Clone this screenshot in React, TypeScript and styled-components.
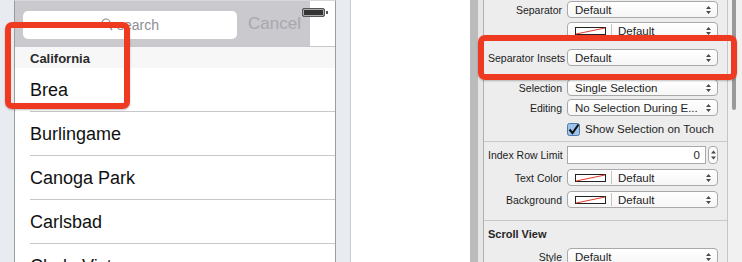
import React from 'react';
import styled, { createGlobalStyle } from 'styled-components';

const Global = createGlobalStyle`
  html, body {
    margin: 0;
    padding: 0;
    background: #ffffff;
  }
`;

const Page = styled.div`
  position: relative;
  display: flex;
  width: 742px;
  height: 262px;
  overflow: hidden;
  font-family: 'Liberation Sans', Arial, sans-serif;
`;

const Gutter = styled.div<{ $w: number; $line?: boolean }>`
  flex: 0 0 ${(p) => p.$w}px;
  background: #e8ecf0;
  border-right: ${(p) => (p.$line ? '1px solid #c3cedb' : 'none')};
`;

const Phone = styled.div`
  position: relative;
  flex: 0 0 320px;
  display: flex;
  flex-direction: column;
  border-left: 1px solid #9c9c9c;
  border-right: 1px solid #9c9c9c;
  border-top: 1px solid #d8d8d8;
  background: #ffffff;
  overflow: hidden;

  & > * {
    flex-shrink: 0;
  }
`;

const SearchRow = styled.div`
  display: flex;
  height: 45px;
  border-bottom: 1px solid #c8c7cc;
`;

const SearchBar = styled.div`
  flex: 0 0 295px;
  display: flex;
  align-items: center;
  gap: 11px;
  padding: 0 8px;
  box-sizing: border-box;
  background: #c9c9ce;
`;

const SearchField = styled.div`
  flex: 0 0 214px;
  height: 28px;
  border-radius: 5px;
  background: #ffffff;
  display: flex;
  align-items: center;
  justify-content: center;
  gap: 4px;
  margin-top: 2px;
  color: #8e8e93;
  font-size: 14px;
  box-sizing: border-box;
`;

const Cancel = styled.span`
  font-size: 17px;
  color: #a8a8ad;
  margin-top: 1px;
`;

const Battery = styled.div`
  position: absolute;
  top: 7px;
  left: 287px;
  width: 21px;
  height: 7px;
  border: 1px solid #555;
  border-radius: 2px;
  background: #333;
  box-shadow: inset 0 0 0 1px #aaa;

  &::after {
    content: '';
    position: absolute;
    right: -4px;
    top: 2px;
    width: 2px;
    height: 3px;
    background: #555;
  }
`;

const SectionHeader = styled.div`
  height: 21px;
  background: #f7f7f7;
  padding-left: 15px;
  font-size: 13px;
  font-weight: bold;
  color: #2b2b2b;
  display: flex;
  align-items: center;
  padding-top: 2px;
  box-sizing: border-box;
`;

const Cell = styled.div`
  height: 44px;
  margin-left: 15px;
  border-bottom: 1px solid #c8c7cc;
  display: flex;
  align-items: center;
  font-size: 18px;
  color: #111;
  box-sizing: border-box;
  padding-top: 1px;
`;

const Canvas = styled.div`
  flex: 0 0 119px;
  background: #ffffff;
`;

const Splitter = styled.div`
  flex: 0 0 8px;
  background: #bbbbbb;
  border-right: 5px solid #e6e6e6;
`;

const Inspector = styled.div`
  flex: 0 0 243px;
  background: #ededed;
  border-left: 1px solid #b0b0b0;
  border-right: 1px solid #c6c6c6;
  display: flex;
  flex-direction: column;
  font-size: 11px;
  color: #262626;
  overflow: hidden;

  & > * {
    flex-shrink: 0;
  }
`;

const Section = styled.div<{ $line?: boolean }>`
  display: flex;
  flex-direction: column;
  padding: 0 9px 0 4px;
  border-bottom: ${(p) => (p.$line ? '1px solid #c9c9c9' : 'none')};
`;

const Field = styled.div<{ $mt: number; $h?: number }>`
  display: grid;
  grid-template-columns: 74px 151px;
  column-gap: 5px;
  align-items: center;
  margin-top: ${(p) => p.$mt}px;
  height: ${(p) => p.$h ?? 17}px;
`;

const Label = styled.span`
  text-align: right;
  font-size: 10.5px;
  white-space: nowrap;
  color: #1c1c1c;
`;

const Popup = styled.div`
  position: relative;
  height: 17px;
  box-sizing: border-box;
  border: 1px solid #a9a9a9;
  border-radius: 4px;
  background: linear-gradient(#ffffff, #f6f6f6);
  display: flex;
  align-items: center;
  padding-left: 7px;
  font-size: 11.5px;
  color: #1e1e1e;
  white-space: nowrap;
`;

const Arrows = styled.svg`
  position: absolute;
  right: 6px;
  top: 4px;
`;

const Swatch = styled.svg`
  flex: 0 0 auto;
  margin-right: 5px;
`;

const Divider = styled.span`
  width: 1px;
  height: 13px;
  background: #c4c4c4;
  margin-right: 6px;
`;

const CheckRow = styled.div<{ $mt: number }>`
  display: flex;
  align-items: center;
  gap: 5px;
  margin-top: ${(p) => p.$mt}px;
  margin-left: 79px;
  height: 14px;
  font-size: 11.5px;
  white-space: nowrap;
`;

const NumberBox = styled.div`
  display: flex;
  align-items: center;
  gap: 2px;
`;

const NumberField = styled.div`
  flex: 1;
  height: 18px;
  box-sizing: border-box;
  border: 1px solid #a9a9a9;
  background: #ffffff;
  text-align: right;
  padding-right: 5px;
  font-size: 11.5px;
  line-height: 16px;
`;

const Stepper = styled.div`
  flex: 0 0 10px;
  height: 18px;
  box-sizing: border-box;
  border: 1px solid #a9a9a9;
  border-radius: 4px;
  background: #fbfbfb;
  display: flex;
  align-items: center;
  justify-content: center;
`;

const SectionTitle = styled.div<{ $mt: number }>`
  margin-top: ${(p) => p.$mt}px;
  font-weight: bold;
  font-size: 11px;
  height: 12px;
  line-height: 12px;
`;

const Spacer = styled.div<{ $h: number }>`
  height: ${(p) => p.$h}px;
`;

const Scroller = styled.div`
  flex: 0 0 14px;
  background: #f1f1f1;
  position: relative;

  &::before {
    content: '';
    position: absolute;
    left: 4px;
    top: -6px;
    width: 4px;
    height: 116px;
    border-radius: 3px;
    background: #9a9a9a;
  }
`;

const Highlight = styled.div<{ $x: number; $y: number; $w: number; $h: number }>`
  position: absolute;
  left: ${(p) => p.$x}px;
  top: ${(p) => p.$y}px;
  width: ${(p) => p.$w}px;
  height: ${(p) => p.$h}px;
  box-sizing: border-box;
  border: 6px solid #ef3a22;
  border-radius: 7px;
  box-shadow: 0 1px 2px rgba(0, 0, 0, 0.25);
`;

const UpDown = () => (
  <Arrows width="5" height="8" viewBox="0 0 5 8">
    <path d="M0 3 L2.5 0 L5 3 Z M0 5 L2.5 8 L5 5 Z" fill="#4a4a4a" />
  </Arrows>
);

const ColorSwatch = () => (
  <Swatch width="31" height="8" viewBox="0 0 31 8">
    <rect x="0.5" y="0.5" width="30" height="7" fill="#fff" stroke="#222" />
    <line x1="1" y1="7" x2="30" y2="1" stroke="#e0392b" strokeWidth="1" />
  </Swatch>
);

const Magnifier = () => (
  <svg width="12" height="13" viewBox="0 0 12 13">
    <circle cx="5" cy="5" r="4" fill="none" stroke="#8e8e93" strokeWidth="1.2" />
    <line x1="8" y1="8.2" x2="11" y2="12" stroke="#8e8e93" strokeWidth="1.3" />
  </svg>
);

const Check = () => (
  <svg width="13" height="13" viewBox="0 0 13 13">
    <rect x="0.5" y="0.5" width="12" height="12" rx="2" fill="#9cc3ec" stroke="#4f79a8" />
    <path d="M2.5 6.5 L5.5 10 L11.5 1.5" fill="none" stroke="#111" strokeWidth="2" />
  </svg>
);

const PopupField = ({ label, value, mt, color }: { label: string; value: string; mt: number; color?: boolean }) => (
  <Field $mt={mt}>
    <Label>{label}</Label>
    <Popup>
      {color && (
        <>
          <ColorSwatch />
          <Divider />
        </>
      )}
      {value}
      <UpDown />
    </Popup>
  </Field>
);

const cities = ['Brea', 'Burlingame', 'Canoga Park', 'Carlsbad', 'Chula Vista'];

export default function App() {
  return (
    <>
      <Global />
      <Page>
        <Gutter $w={14} />
        <Phone>
          <SearchRow>
            <SearchBar>
              <SearchField>
                <Magnifier />
                search
              </SearchField>
              <Cancel>Cancel</Cancel>
            </SearchBar>
          </SearchRow>
          <Battery />
          <SectionHeader>California</SectionHeader>
          {cities.map((c) => (
            <Cell key={c}>{c}</Cell>
          ))}
        </Phone>
        <Gutter $w={14} $line />
        <Canvas />
        <Splitter />
        <Inspector>
          <Section $line>
            <PopupField label="Separator" value="Default" mt={1} />
            <PopupField label="" value="Default" mt={4} color />
            <PopupField label="Separator Insets" value="Default" mt={10} />
            <PopupField label="Selection" value="Single Selection" mt={13} />
            <PopupField label="Editing" value="No Selection During E..." mt={3} />
            <CheckRow $mt={6}>
              <Check />
              Show Selection on Touch
            </CheckRow>
            <Spacer $h={5} />
          </Section>
          <Section $line>
            <Field $mt={4} $h={18}>
              <Label>Index Row Limit</Label>
              <NumberBox>
                <NumberField>0</NumberField>
                <Stepper>
                  <svg width="5" height="10" viewBox="0 0 5 10">
                    <path d="M0 3.5 L2.5 0.5 L5 3.5 Z M0 6.5 L2.5 9.5 L5 6.5 Z" fill="#4a4a4a" />
                  </svg>
                </Stepper>
              </NumberBox>
            </Field>
            <PopupField label="Text Color" value="Default" mt={5} color />
            <PopupField label="Background" value="Default" mt={5} color />
            <Spacer $h={12} />
          </Section>
          <Section>
            <SectionTitle $mt={7}>Scroll View</SectionTitle>
            <PopupField label="Style" value="Default" mt={8} />
          </Section>
        </Inspector>
        <Scroller />
        <Highlight $x={5} $y={22} $w={125} $h={87} />
        <Highlight $x={478} $y={35} $w={259} $h={45} />
      </Page>
    </>
  );
}
